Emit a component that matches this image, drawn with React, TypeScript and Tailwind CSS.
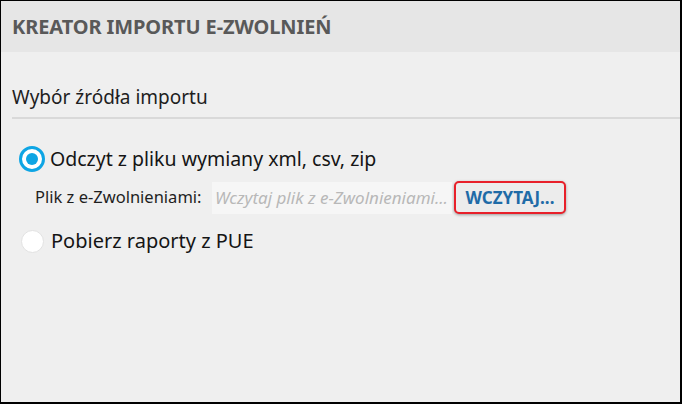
const font = "font-['Noto_Sans','Open_Sans',sans-serif]";

function Radio({ checked }: { checked: boolean }) {
  if (checked) {
    return (
      <span className="w-[26px] h-[26px] rounded-full border-[3px] border-[#0ea5e4] bg-white flex items-center justify-center shrink-0">
        <span className="w-[12px] h-[12px] rounded-full bg-[#0ea5e4]" />
      </span>
    );
  }
  return <span className="w-[23px] h-[23px] rounded-full border border-[#e2e2e2] bg-white shrink-0 ml-[2px] mr-[1px]" />;
}

export default function App() {
  return (
    <div className={`w-[682px] h-[404px] bg-[#efefef] border-t border-l border-r-2 border-b-2 border-black flex flex-col ${font}`}>
      <div className="h-[51px] bg-[#e6e6e6] flex items-center px-[11px]">
        <h1 className="text-[20px] font-bold text-[#595959] tracking-[-0.1px]">KREATOR IMPORTU E-ZWOLNIEŃ</h1>
      </div>

      <div className="pl-[11px] pt-[32px]">
        <div className="text-[19px] text-[#1e1e1e] leading-[26px] pb-[7px] border-b-2 border-[#d9d9d9]">Wybór źródła importu</div>
      </div>

      <div className="pl-[18px] pt-[26px] flex flex-col">
        <label className="flex items-center gap-[5px] h-[28px]">
          <Radio checked />
          <span className="text-[19.5px] text-[#151515]">Odczyt z pliku wymiany xml, csv, zip</span>
        </label>

        <div className="flex items-center mt-[8px] pl-[16px]">
          <span className="text-[16.5px] text-[#1e1e1e] w-[177px]">Plik z e-Zwolnieniami:</span>
          <div className="w-[240px] h-[32px] bg-[#f6f6f6] flex items-center px-[3px] overflow-hidden">
            <span className="text-[17px] italic text-[#b8b8b8] whitespace-nowrap">Wczytaj plik z e-Zwolnieniami...</span>
          </div>
          <button className="ml-[2px] w-[112px] h-[33px] rounded-[5px] border-2 border-[#e8202a] bg-[#ececec] shadow-[0_1px_3px_rgba(0,0,0,0.35)] text-[17px] font-bold text-[#1f6ba7]">
            WCZYTAJ...
          </button>
        </div>

        <label className="flex items-center gap-[6px] h-[28px] mt-[13px]">
          <Radio checked={false} />
          <span className="text-[20px] text-[#151515]">Pobierz raporty z PUE</span>
        </label>
      </div>
    </div>
  );
}
